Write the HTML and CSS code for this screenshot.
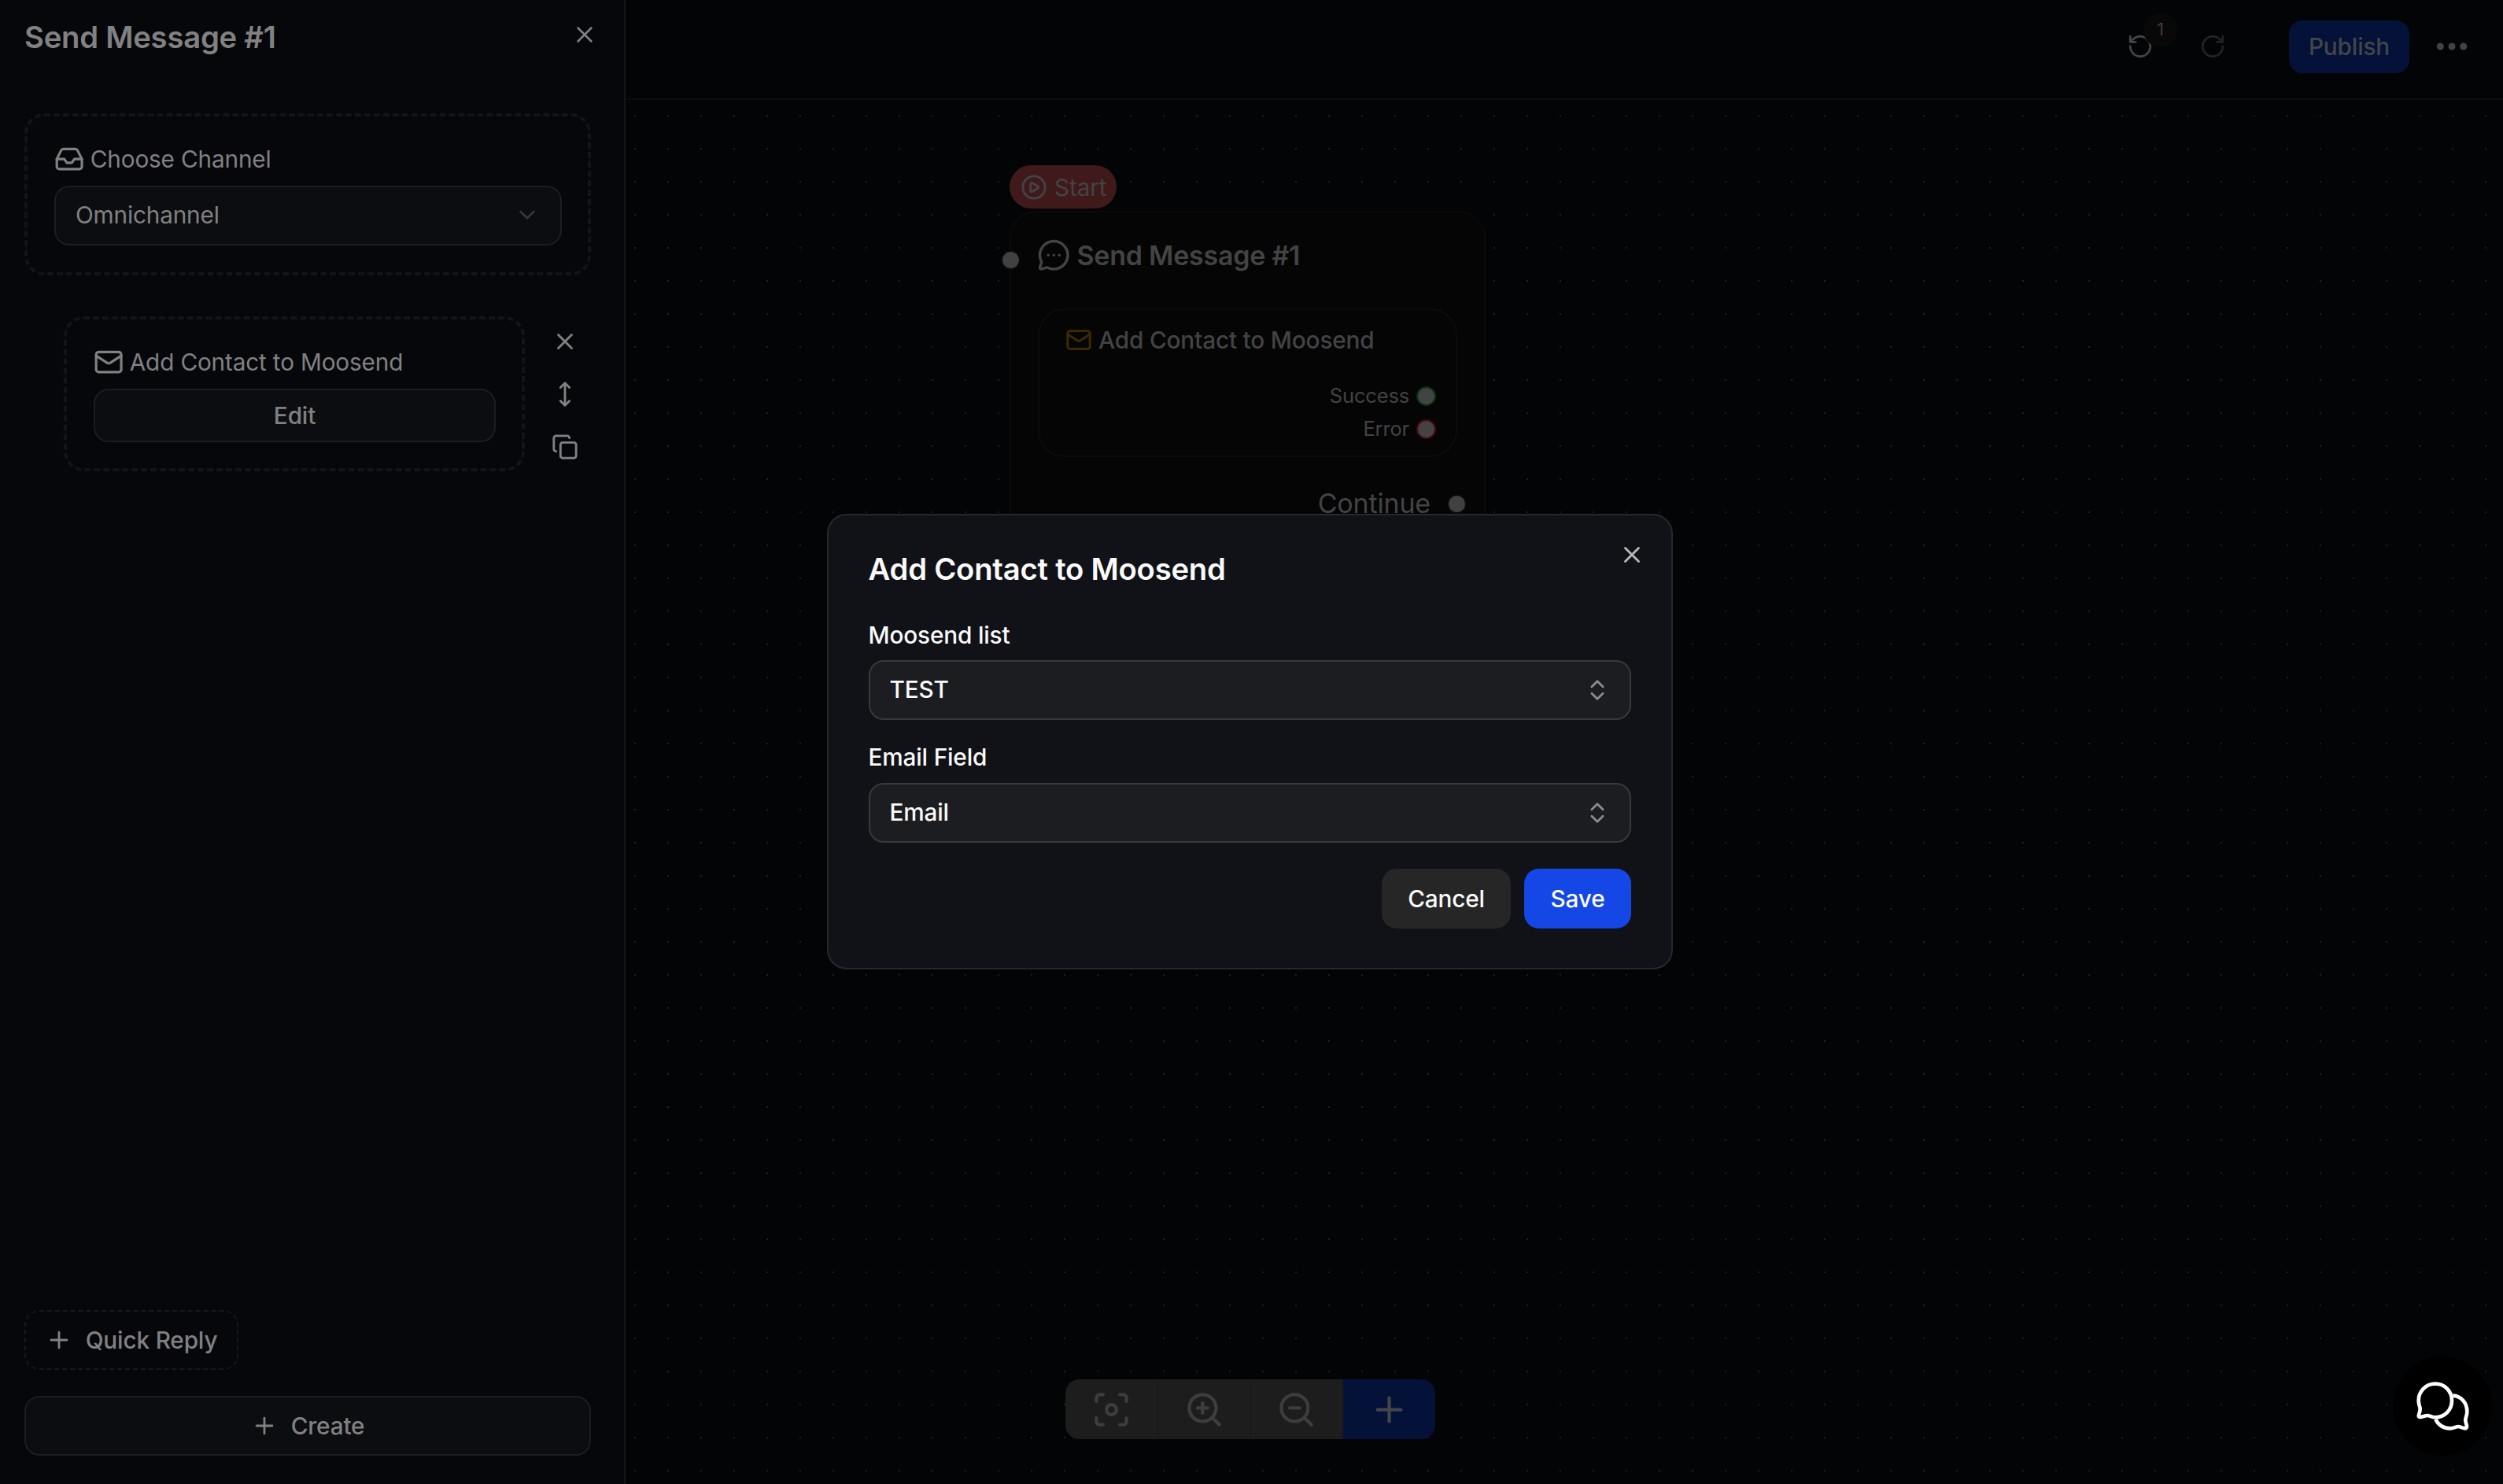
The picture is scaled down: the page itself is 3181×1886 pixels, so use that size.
FILE: index.html
```html
<!DOCTYPE html>
<html lang="en">
<head>
<meta charset="utf-8">
<title>Flow editor</title>
<link rel="stylesheet" href="styles.css">
</head>
<body>
<svg class="defs" width="0" height="0" aria-hidden="true">
  <symbol id="x" viewBox="0 0 24 24"><path d="M18 6 6 18M6 6l12 12"/></symbol>
  <symbol id="plus" viewBox="0 0 24 24"><path d="M5 12h14M12 5v14"/></symbol>
  <symbol id="inbox" viewBox="0 0 24 24"><path d="M22 12h-6l-2 3h-4l-2-3H2"/><path d="M5.45 5.11 2 12v6a2 2 0 0 0 2 2h16a2 2 0 0 0 2-2v-6l-3.45-6.89A2 2 0 0 0 16.76 4H7.24a2 2 0 0 0-1.79 1.11z"/></symbol>
  <symbol id="mail" viewBox="0 0 24 24"><rect x="2" y="4" width="20" height="16" rx="2"/><path d="m22 7-8.991 5.727a2 2 0 0 1-2.009 0L2 7"/></symbol>
  <symbol id="down" viewBox="0 0 24 24"><path d="m6 9 6 6 6-6"/></symbol>
  <symbol id="updown" viewBox="0 0 24 24"><path d="m7 15 5 5 5-5M7 9l5-5 5 5"/></symbol>
  <symbol id="move" viewBox="0 0 24 24"><path d="M12 2v20M8 18l4 4 4-4M8 6l4-4 4 4"/></symbol>
  <symbol id="copy" viewBox="0 0 24 24"><rect x="8" y="8" width="14" height="14" rx="2"/><path d="M4 16c-1.1 0-2-.9-2-2V4c0-1.1.9-2 2-2h10c1.1 0 2 .9 2 2"/></symbol>
  <symbol id="undo" viewBox="0 0 24 24"><path d="M3 12a9 9 0 1 0 9-9 9.75 9.75 0 0 0-6.74 2.74L3 8"/><path d="M3 3v5h5"/></symbol>
  <symbol id="redo" viewBox="0 0 24 24"><path d="M21 12a9 9 0 1 1-9-9c2.52 0 4.93 1 6.74 2.74L21 8"/><path d="M21 3v5h-5"/></symbol>
  <symbol id="play" viewBox="0 0 24 24"><circle cx="12" cy="12" r="10"/><path d="M9 9.003a1 1 0 0 1 1.517-.859l4.997 2.997a1 1 0 0 1 0 1.718l-4.997 2.997A1 1 0 0 1 9 14.996z"/></symbol>
  <symbol id="message" viewBox="0 0 24 24"><path d="M2.992 16.342a2 2 0 0 1 .094 1.167l-1.065 3.29a1 1 0 0 0 1.236 1.168l3.413-.998a2 2 0 0 1 1.099.092 10 10 0 1 0-4.777-4.719"/><path d="M8 12h.01M12 12h.01M16 12h.01"/></symbol>
  <symbol id="focus" viewBox="0 0 24 24"><circle cx="12" cy="12" r="3"/><path d="M3 7V5a2 2 0 0 1 2-2h2M17 3h2a2 2 0 0 1 2 2v2M21 17v2a2 2 0 0 1-2 2h-2M7 21H5a2 2 0 0 1-2-2v-2"/></symbol>
  <symbol id="zoomin" viewBox="0 0 24 24"><circle cx="11" cy="11" r="8"/><path d="m21 21-4.35-4.35M11 8v6M8 11h6"/></symbol>
  <symbol id="zoomout" viewBox="0 0 24 24"><circle cx="11" cy="11" r="8"/><path d="m21 21-4.35-4.35M8 11h6"/></symbol>
</svg>

<div class="app">
  <aside class="sidebar">
    <header class="panel-head">
      <h2 class="panel-title">Send Message #1</h2>
      <svg class="icon panel-close"><use href="#x"/></svg>
    </header>

    <section class="card">
      <div class="card-title"><svg class="icon icon-md"><use href="#inbox"/></svg><span>Choose Channel</span></div>
      <div class="select"><span>Omnichannel</span><svg class="icon chevron"><use href="#down"/></svg></div>
    </section>

    <div class="step">
      <section class="card step-card">
        <div class="card-title"><svg class="icon icon-md"><use href="#mail"/></svg><span>Add Contact to Moosend</span></div>
        <button class="btn-edit">Edit</button>
      </section>
      <div class="step-tools">
        <svg class="icon"><use href="#x"/></svg>
        <svg class="icon"><use href="#move"/></svg>
        <svg class="icon"><use href="#copy"/></svg>
      </div>
    </div>

    <footer class="panel-foot">
      <button class="btn-quick"><svg class="icon"><use href="#plus"/></svg><span>Quick Reply</span></button>
      <button class="btn-create"><svg class="icon"><use href="#plus"/></svg><span>Create</span></button>
    </footer>
  </aside>

  <main class="main">
    <header class="topbar">
      <div class="undo"><svg class="icon"><use href="#undo"/></svg><span class="badge">1</span></div>
      <svg class="icon redo"><use href="#redo"/></svg>
      <button class="btn-publish">Publish</button>
      <svg class="more" viewBox="0 0 40 10"><circle cx="5.3" cy="5" r="4.5"/><circle cx="20" cy="5" r="4.5"/><circle cx="34.7" cy="5" r="4.5"/></svg>
    </header>

    <div class="canvas">
      <div class="start"><svg class="icon"><use href="#play"/></svg><span>Start</span></div>
      <article class="node">
        <i class="handle handle-in"></i>
        <h3 class="node-title"><svg class="icon icon-lg"><use href="#message"/></svg><span>Send Message #1</span></h3>
        <div class="node-card">
          <div class="node-card-title"><svg class="icon gold"><use href="#mail"/></svg><span>Add Contact to Moosend</span></div>
          <div class="outcome"><span>Success</span><i class="port port-ok"></i></div>
          <div class="outcome"><span>Error</span><i class="port port-err"></i></div>
        </div>
        <div class="continue"><span>Continue</span><i class="handle"></i></div>
      </article>
      <div class="toolbar">
        <button><svg class="icon"><use href="#focus"/></svg></button>
        <button><svg class="icon"><use href="#zoomin"/></svg></button>
        <button><svg class="icon"><use href="#zoomout"/></svg></button>
        <button class="add"><svg class="icon"><use href="#plus"/></svg></button>
      </div>
    </div>
  </main>
</div>

<div class="overlay">
  <div class="modal">
    <svg class="icon modal-close"><use href="#x"/></svg>
    <h2 class="modal-title">Add Contact to Moosend</h2>
    <div class="field">
      <label>Moosend list</label>
      <div class="combo"><span>TEST</span><svg class="icon"><use href="#updown"/></svg></div>
    </div>
    <div class="field">
      <label>Email Field</label>
      <div class="combo"><span>Email</span><svg class="icon"><use href="#updown"/></svg></div>
    </div>
    <div class="actions">
      <button class="btn-cancel">Cancel</button>
      <button class="btn-save">Save</button>
    </div>
  </div>
</div>

<div class="chat">
  <svg viewBox="265 221 213 199">
    <path d="M410 280C441 281 464 308 464 341C464 355 458 364 458 374C458 383 463 391 463 398C463 404 459 406 453 404C443 402 436 398 430 398C423 398 412 405 399 405C372 404 354 391 344 370"/>
    <path d="M343 235C379 235 406 263 406 299C406 335 379 363 343 363C330 363 321 356 314 356C305 356 293 361 286 362C280 363 278 359 280 353C282 346 285 339 285 331C285 323 279 314 279 299C279 263 307 235 343 235Z"/>
  </svg>
</div>
</body>
</html>
```
FILE: styles.css
```css
* { box-sizing: border-box; }

body {
  margin: 0;
  height: 1886px;
  overflow: hidden;
  background: #030406;
  color: #818182;
  font-family: Inter, "Liberation Sans", sans-serif;
  font-size: 29.75px;
  line-height: 42px;
  letter-spacing: -0.17px;
}

h2, h3 { margin: 0; font-weight: 600; letter-spacing: -0.24px; }

button {
  display: flex;
  align-items: center;
  justify-content: center;
  padding: 0;
  border: 0;
  background: none;
  color: inherit;
  font: inherit;
  font-weight: 500;
  letter-spacing: inherit;
}

.defs { position: absolute; }

.icon {
  display: block;
  flex: none;
  width: 34px;
  height: 34px;
  fill: none;
  stroke: currentColor;
  stroke-width: 2;
  stroke-linecap: round;
  stroke-linejoin: round;
}
.icon-md { width: 38.25px; height: 38.25px; }
.icon-lg { width: 42.5px; height: 42.5px; }

.app { display: flex; height: 1886px; }

/* Side panel */
.sidebar {
  display: flex;
  flex-direction: column;
  flex: none;
  width: 795px;
  padding: 0 42px 36px 31px;
  border-right: 2px solid #141518;
  background: #06070b;
}

.panel-head {
  display: flex;
  justify-content: space-between;
  height: 144px;
  padding-top: 22px;
}
.panel-title { font-size: 38.25px; line-height: 51px; }
.panel-close { margin: 5px -9px 0 0; stroke-width: 1.8; }

.card {
  padding: 33px 34px;
  border: 4px dashed #131417;
  border-radius: 25px;
}
.card-title {
  display: flex;
  align-items: center;
  gap: 7.5px;
  margin-bottom: 13px;
}
.select {
  display: flex;
  align-items: center;
  justify-content: space-between;
  width: 645px;
  height: 76px;
  margin-bottom: 1px;
  padding: 0 25px 2px;
  border: 2px solid #1c1d20;
  border-radius: 19px;
  background: #0c0d11;
}
.chevron { stroke-width: 1.8; color: #37383b; }

.step { display: flex; align-items: flex-start; gap: 34px; margin: 52px 0 0 50px; }
.step-card { width: 586px; }
.btn-edit {
  width: 511px;
  height: 68px;
  padding-bottom: 1px;
  border: 2px solid #1c1d20;
  border-radius: 19px;
  background: #0c0d11;
}
.step-tools { display: flex; flex-direction: column; gap: 33px; padding-top: 15px; }

.panel-foot { display: flex; flex-direction: column; gap: 33px; margin-top: auto; }
.btn-quick, .btn-create { gap: 17px; height: 76px; padding-bottom: 1px; border-radius: 19px; }
.btn-quick { width: 272px; border: 2px dashed #17181b; }
.btn-create { border: 2px solid #1c1d20; background: #0c0d11; }

/* Top bar */
.main { display: flex; flex: 1; flex-direction: column; min-width: 0; color: #434344; }
.topbar {
  display: flex;
  align-items: center;
  justify-content: flex-end;
  height: 127px;
  padding: 0 45px 7px 0;
  border-bottom: 2px solid #0a0b0d;
}
.undo { position: relative; margin-right: 58px; }
.badge {
  position: absolute;
  left: 21px;
  top: -25px;
  width: 43px;
  height: 43px;
  border-radius: 50%;
  background: #080808;
  color: #454039;
  font-size: 21.5px;
  line-height: 41px;
  text-align: center;
}
.redo { margin-right: 80px; color: #212224; }
.btn-publish {
  width: 153px;
  height: 67px;
  margin-right: 34px;
  padding-bottom: 1px;
  border-radius: 17px;
  background: #041139;
  color: #434549;
}
.more { width: 40px; height: 10px; fill: #434344; }

/* Flow canvas */
.canvas {
  position: relative;
  flex: 1;
  background: radial-gradient(circle at 1px 1px, #222325 2px, transparent 2px) 11px 19px / 42px 42px;
  background: conic-gradient(from 270deg at 2px 2px, #1f2022 90deg, transparent 0) 11px 19px / 42px 42px;
}
.start {
  position: absolute;
  left: 488px;
  top: 83px;
  display: flex;
  align-items: center;
  gap: 9px;
  width: 136px;
  height: 55px;
  padding-left: 14px;
  border-radius: 28px;
  background: #401a1b;
}
.node {
  position: absolute;
  left: 488px;
  top: 141px;
  width: 605px;
  height: 480px;
  padding: 33px 34px;
  border: 2px solid #0a0a0a;
  border-radius: 34px;
  background: #050505;
}
.node-title {
  display: flex;
  align-items: center;
  gap: 8px;
  height: 43px;
  margin-left: -1px;
  font-size: 34px;
}
.node-card {
  height: 189px;
  margin-top: 46px;
  padding: 17px 25px 0 33px;
  border: 2px solid #0c0c0c;
  border-radius: 34px;
}
.node-card-title {
  display: flex;
  align-items: center;
  gap: 8px;
  margin-bottom: 29px;
  font-weight: 500;
}
.node-card-title span { padding-bottom: 1px; }
.node-card-title { height: 42px; }
.gold { color: #3f2b02; }
.outcome {
  display: flex;
  align-items: center;
  justify-content: flex-end;
  gap: 9px;
  font-size: 25.5px;
}
.port { width: 25px; height: 25px; border: 2px solid; border-radius: 50%; background: #434343; }
.port-ok { border-color: #02350f; }
.port-err { border-color: #4a0a0d; }
.handle { width: 21px; height: 21px; border-radius: 50%; background: #414141; box-shadow: 0 0 0 2px #0b0b0c; }
.handle-in { position: absolute; left: -11px; top: 50px; }
.continue {
  display: flex;
  align-items: center;
  justify-content: flex-end;
  gap: 23px;
  margin: 38px -10px 0 0;
  font-size: 34px;
}

.toolbar {
  position: absolute;
  left: 559px;
  top: 1626px;
  display: flex;
  width: 470px;
  height: 76px;
  overflow: hidden;
  border-radius: 18px;
  background: #1d1d1d;
  color: #3d3d3e;
}
.toolbar button { flex: 1; border-right: 1px solid #181818; }
.toolbar .icon { width: 51px; height: 51px; }
.toolbar .add { border: 0; background: #041139; color: #434549; }

/* Dialog */
.overlay {
  position: fixed;
  inset: 0;
  display: flex;
  align-items: center;
  justify-content: center;
  padding: 0 4px 1px 0;
}
.modal {
  position: relative;
  width: 1075px;
  height: 579px;
  padding: 43px 51px 0 50.5px;
  border: 2px solid #27282c;
  border-radius: 25px;
  background: #111217;
  color: #fafafa;
}
.modal-close { position: absolute; top: 33px; right: 33px; color: #b8b8ba; }
.modal-title { font-size: 38.25px; line-height: 51px; }
.field { padding-top: 37px; font-weight: 500; }
.field + .field { padding-top: 26px; }
.field label { display: block; margin-bottom: 11px; }
.field + .field label { margin-bottom: 12px; }
.combo {
  display: flex;
  align-items: center;
  justify-content: space-between;
  height: 76px;
  padding: 0 24px 0 25px;
  border: 2px solid #38393c;
  border-radius: 19px;
  background: #1c1d21;
}
.combo span { padding-bottom: 2px; }
.field + .field .combo span { padding-bottom: 3px; }
.combo .icon { color: #8b8b8e; }
.actions { display: flex; justify-content: flex-end; gap: 17px; margin-top: 33px; }
.actions button { height: 76px; padding-bottom: 1px; border-radius: 19px; }
.btn-cancel { width: 164px; background: #262627; }
.btn-save { width: 136px; background: #1447e6; }

/* Chat launcher */
.chat {
  position: fixed;
  left: 3041px;
  top: 1724px;
  display: flex;
  align-items: center;
  justify-content: center;
  width: 126px;
  height: 126px;
  border-radius: 50%;
  background: #000;
}
.chat svg {
  width: 71px;
  height: 66.3px;
  fill: none;
  stroke: #fff;
  stroke-width: 14;
  stroke-linejoin: round;
}
```
